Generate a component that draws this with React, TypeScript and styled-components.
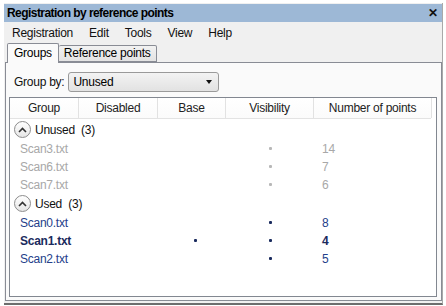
import styled, { createGlobalStyle } from "styled-components";

const GlobalStyle = createGlobalStyle`
  html, body {
    margin: 0;
    padding: 0;
    background: #ffffff;
  }
  body {
    font-family: "Liberation Sans", Arial, sans-serif;
    font-size: 12px;
    letter-spacing: -0.25px;
    color: #000;
  }
`;

const Screen = styled.div`
  width: 446px;
  height: 306px;
  padding: 3px 3px 0 4px;
  box-sizing: border-box;
  overflow: hidden;
`;

const Window = styled.div`
  width: 439px;
  height: 302px;
  background: #f0f0f0;
  border-right: 1px solid #a9a9a9;
  border-bottom: 2px solid #6d6d6d;
  box-sizing: border-box;
  display: flex;
  flex-direction: column;
`;

const TitleBar = styled.div`
  height: 18px;
  margin-top: 1px;
  background: #9db8d6;
  display: flex;
  align-items: center;
  justify-content: space-between;
  padding: 0 5px 0 3px;
  font-weight: bold;
  font-size: 12px;
  letter-spacing: -0.55px;
`;

const CloseGlyph = styled.span`
  font-size: 12px;
  font-weight: bold;
  color: #111;
  line-height: 1;
`;

const MenuBar = styled.div`
  height: 22px;
  display: flex;
  align-items: center;
  padding: 1px 0 0 0;
  box-sizing: border-box;
`;

const MenuItem = styled.span`
  padding: 0 8px;
  color: #111;
`;

const TabStrip = styled.div`
  height: 18px;
  display: flex;
  align-items: flex-end;
  padding-left: 3px;
  position: relative;
  z-index: 1;
`;

const Tab = styled.div<{ $active?: boolean }>`
  box-sizing: border-box;
  height: ${(p) => (p.$active ? "20px" : "17px")};
  margin-bottom: ${(p) => (p.$active ? "-1px" : "0")};
  padding: 0 ${(p) => (p.$active ? "6px" : "5px")};
  display: flex;
  align-items: center;
  border: 1px solid #898c95;
  border-bottom: ${(p) => (p.$active ? "none" : "1px solid #898c95")};
  border-left: ${(p) => (p.$active ? "1px solid #898c95" : "none")};
  background: ${(p) =>
    p.$active ? "#fafafa" : "linear-gradient(#f2f2f2, #e3e3e3)"};
  border-radius: 2px 2px 0 0;
`;

const Panel = styled.div`
  margin: 0 0 2px 1px;
  width: 437px;
  height: 240px;
  box-sizing: border-box;
  border: 1px solid #898c95;
  background: #fafafa;
  padding: 9px 4px 3px 3px;
  display: flex;
  flex-direction: column;
  gap: 5px;
`;

const GroupByRow = styled.div`
  display: flex;
  align-items: center;
  gap: 4px;
  padding-left: 5px;
`;

const Label = styled.span`
  color: #111;
`;

const Combo = styled.div`
  width: 151px;
  height: 20px;
  box-sizing: border-box;
  border: 1px solid #9a9a9a;
  border-radius: 3px;
  background: linear-gradient(#f3f3f3, #e2e2e2);
  display: flex;
  align-items: center;
  justify-content: space-between;
  padding: 0 6px 0 4px;
`;

const Arrow = styled.span`
  width: 0;
  height: 0;
  border-left: 3.5px solid transparent;
  border-right: 3.5px solid transparent;
  border-top: 4px solid #111;
`;

const Grid = styled.div`
  flex: 1;
  box-sizing: border-box;
  border: 1px solid #828790;
  background: #ffffff;
  display: flex;
  flex-direction: column;
`;

const COLS = "69px 79px 68px 88px 118px";

const HeaderRow = styled.div`
  display: grid;
  grid-template-columns: ${COLS};
  height: 20px;
  border-bottom: 1px solid #e3e3e3;
  margin-right: 5px;
  background: linear-gradient(#ffffff, #fbfbfb);
`;

const HeaderCell = styled.div`
  display: flex;
  align-items: center;
  justify-content: center;
  border-right: 1px solid #e2e2e2;
  color: #222;
`;

const Body = styled.div`
  padding-top: 1px;
  display: flex;
  flex-direction: column;
`;

const GroupRow = styled.div`
  height: 20px;
  display: flex;
  align-items: center;
  gap: 4px;
  padding-left: 4px;
  color: #111;
`;

const Expander = styled.span`
  width: 15px;
  height: 15px;
  border: 1px solid #8c8c8c;
  border-radius: 50%;
  background: linear-gradient(#ffffff, #e6e6e6);
  display: flex;
  align-items: center;
  justify-content: center;
`;

const DataRow = styled.div<{ $used: boolean; $bold?: boolean }>`
  display: grid;
  grid-template-columns: ${COLS};
  height: 18px;
  align-items: center;
  font-weight: ${(p) => (p.$bold ? "bold" : "normal")};
  color: ${(p) => (p.$used ? (p.$bold ? "#1a2b5e" : "#24408a") : "#a8a8a8")};
`;

const NameCell = styled.span`
  padding-left: 10px;
  white-space: nowrap;
`;

const DotCell = styled.span<{ $shift?: number }>`
  display: flex;
  justify-content: center;
  padding-left: ${(p) => p.$shift ?? 0}px;
`;

const Dot = styled.span<{ $used: boolean }>`
  width: 3px;
  height: 3px;
  border-radius: 1px;
  background: ${(p) => (p.$used ? "#1a2b5e" : "#b8b8b8")};
`;

const CountCell = styled.span`
  padding-left: 8px;
`;

type Scan = { name: string; base?: boolean; points: number; bold?: boolean };

const groups: { title: string; used: boolean; scans: Scan[] }[] = [
  {
    title: "Unused",
    used: false,
    scans: [
      { name: "Scan3.txt", points: 14 },
      { name: "Scan6.txt", points: 7 },
      { name: "Scan7.txt", points: 6 },
    ],
  },
  {
    title: "Used",
    used: true,
    scans: [
      { name: "Scan0.txt", points: 8 },
      { name: "Scan1.txt", points: 4, base: true, bold: true },
      { name: "Scan2.txt", points: 5 },
    ],
  },
];

function ChevronUp() {
  return (
    <svg width="9" height="6" viewBox="0 0 9 6">
      <path d="M1 5 L4.5 1.5 L8 5" fill="none" stroke="#333" strokeWidth="1.6" />
    </svg>
  );
}

export default function App() {
  return (
    <>
      <GlobalStyle />
      <Screen>
        <Window>
          <TitleBar>
            <span>Registration by reference points</span>
            <CloseGlyph>✕</CloseGlyph>
          </TitleBar>
          <MenuBar>
            {["Registration", "Edit", "Tools", "View", "Help"].map((m) => (
              <MenuItem key={m}>{m}</MenuItem>
            ))}
          </MenuBar>
          <TabStrip>
            <Tab $active>Groups</Tab>
            <Tab>Reference points</Tab>
          </TabStrip>
          <Panel>
            <GroupByRow>
              <Label>Group by:</Label>
              <Combo>
                <span>Unused</span>
                <Arrow />
              </Combo>
            </GroupByRow>
            <Grid>
              <HeaderRow>
                <HeaderCell>Group</HeaderCell>
                <HeaderCell>Disabled</HeaderCell>
                <HeaderCell>Base</HeaderCell>
                <HeaderCell>Visibility</HeaderCell>
                <HeaderCell>Number of points</HeaderCell>
              </HeaderRow>
              <Body>
                {groups.map((g) => (
                  <div key={g.title}>
                    <GroupRow>
                      <Expander>
                        <ChevronUp />
                      </Expander>
                      <span>
                        {g.title}&nbsp; ({g.scans.length})
                      </span>
                    </GroupRow>
                    {g.scans.map((s) => (
                      <DataRow key={s.name} $used={g.used} $bold={s.bold}>
                        <NameCell>{s.name}</NameCell>
                        <span />
                        <DotCell $shift={7}>
                          {s.base && <Dot $used={g.used} />}
                        </DotCell>
                        <DotCell>
                          <Dot $used={g.used} />
                        </DotCell>
                        <CountCell>{s.points}</CountCell>
                      </DataRow>
                    ))}
                  </div>
                ))}
              </Body>
            </Grid>
          </Panel>
        </Window>
      </Screen>
    </>
  );
}
